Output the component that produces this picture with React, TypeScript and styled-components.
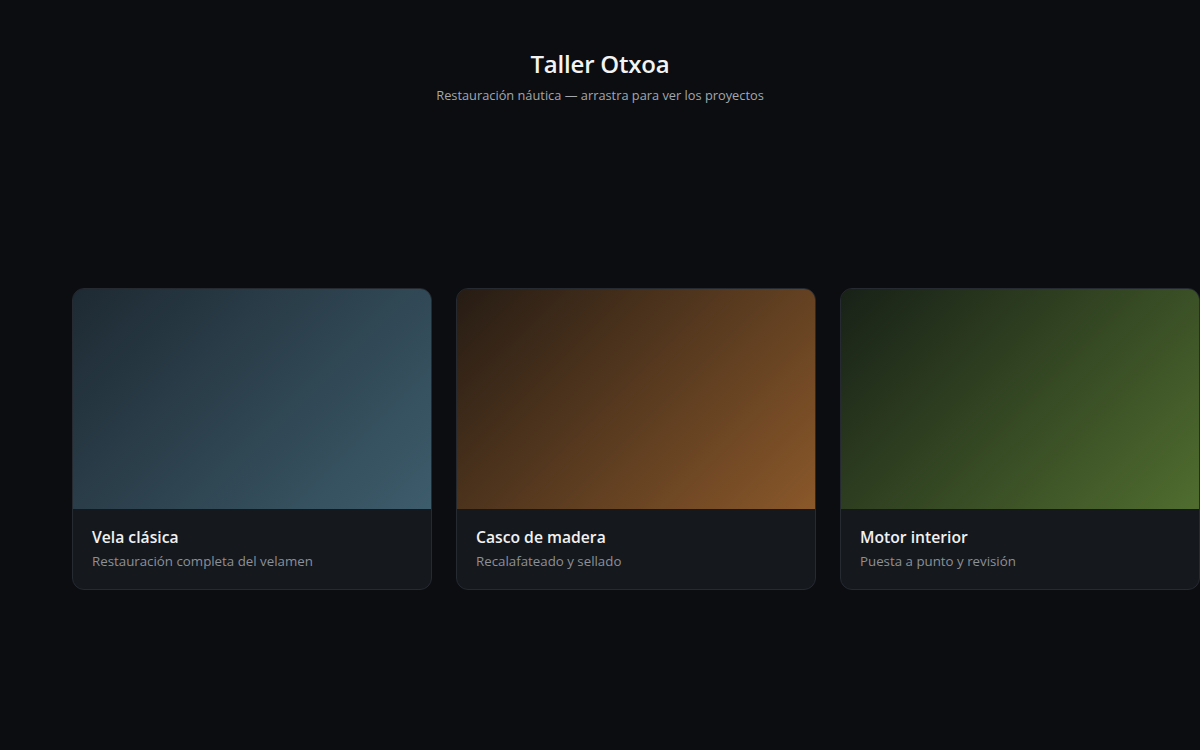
import styled, { createGlobalStyle } from "styled-components";

interface Project {
  title: string;
  text: string;
  from: string;
  to: string;
}

const projects: Project[] = [
  { title: "Vela clásica", text: "Restauración completa del velamen", from: "#1e2a33", to: "#3d5c6c" },
  { title: "Casco de madera", text: "Recalafateado y sellado", from: "#261c14", to: "#8a582a" },
  { title: "Motor interior", text: "Puesta a punto y revisión", from: "#182117", to: "#506d2f" },
];

const GlobalStyle = createGlobalStyle`
  * { box-sizing: border-box; }
  html, body {
    margin: 0;
    background: #0b0d11;
    font-family: "Open Sans", "Noto Sans", sans-serif;
    overflow: hidden;
  }
`;

const Page = styled.main`
  height: 100vh;
  display: flex;
  flex-direction: column;
`;

const Header = styled.header`
  padding-top: 47px;
  text-align: center;
`;

const Title = styled.h1`
  margin: 0;
  font-size: 24px;
  font-weight: 600;
  color: #f3f3f3;
  letter-spacing: -0.2px;
`;

const Subtitle = styled.p`
  margin: 6px 0 0;
  font-size: 12.8px;
  color: #a3a7ae;
`;

const Stage = styled.section`
  flex: 1;
  display: flex;
  align-items: center;
  padding-top: 23px;
`;

const Track = styled.div`
  display: flex;
  gap: 24px;
  padding-left: 72px;
  overflow: hidden;
  width: 100%;
  cursor: grab;
`;

const Card = styled.article`
  flex: 0 0 360px;
  border-radius: 12px;
  overflow: hidden;
  border: 1px solid #262a31;
  background: #15181d;
`;

const Cover = styled.div<{ $from: string; $to: string }>`
  height: 220px;
  background: linear-gradient(135deg, ${(p) => p.$from}, ${(p) => p.$to});
`;

const Body = styled.div`
  padding: 17px 19px 19px;
`;

const CardTitle = styled.h2`
  margin: 0;
  font-size: 15.7px;
  font-weight: 600;
  color: #f1f1f1;
`;

const CardText = styled.p`
  margin: 4px 0 0;
  font-size: 13.3px;
  color: #8c9097;
`;

export default function App() {
  return (
    <Page>
      <GlobalStyle />
      <Header>
        <Title>Taller Otxoa</Title>
        <Subtitle>Restauración náutica — arrastra para ver los proyectos</Subtitle>
      </Header>
      <Stage>
        <Track>
          {projects.map((p) => (
            <Card key={p.title}>
              <Cover $from={p.from} $to={p.to} />
              <Body>
                <CardTitle>{p.title}</CardTitle>
                <CardText>{p.text}</CardText>
              </Body>
            </Card>
          ))}
        </Track>
      </Stage>
    </Page>
  );
}
